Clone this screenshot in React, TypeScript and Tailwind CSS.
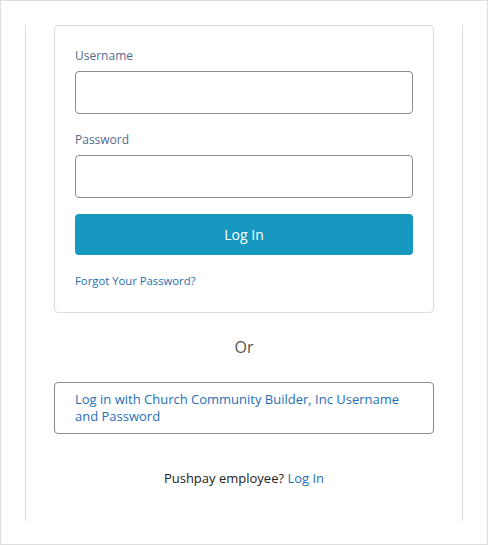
export default function App() {
  return (
    <div className="w-[488px] h-[545px] bg-white border border-[#dddddd] px-6 pt-6 font-['Open_Sans',sans-serif]">
      <div className="h-[496px] border-x border-[#dddddd] px-7">
        {/* Login card */}
        <div className="rounded border border-[#d8dde6] px-5 pt-[20px] pb-[22px]">
          <label className="block text-[12px] leading-[19px] text-[#54698d]">Username</label>
          <input
            type="text"
            className="mt-[6px] block w-full h-[43px] rounded border border-[#8c8c8c] bg-white px-3 outline-none"
          />
          <label className="mt-[16px] block text-[12px] leading-[19px] text-[#54698d]">Password</label>
          <input
            type="password"
            className="mt-[6px] block w-full h-[43px] rounded border border-[#8c8c8c] bg-white px-3 outline-none"
          />
          <button className="mt-[16px] block w-full h-[41px] rounded bg-[#1798c1] text-[14px] text-white">
            Log In
          </button>
          <a className="mt-[17px] block text-[11.3px] leading-[18px] text-[#1f6fb5]">Forgot Your Password?</a>
        </div>

        <div className="mt-[23px] text-center text-[16px] leading-[22px] text-[#555555]">Or</div>

        <button className="mt-[24px] block w-full rounded border border-[#8c8c8c] bg-white pl-5 pr-4 pt-[8px] pb-[8px] text-left text-[13px] leading-[17px] text-[#1f6fb5]">
          Log in with Church Community Builder, Inc Username and Password
        </button>

        <div className="mt-[35px] text-center text-[13px] leading-[18px] text-[#222222]">
          Pushpay employee? <a className="text-[#1f6fb5]">Log In</a>
        </div>
      </div>
    </div>
  )
}
